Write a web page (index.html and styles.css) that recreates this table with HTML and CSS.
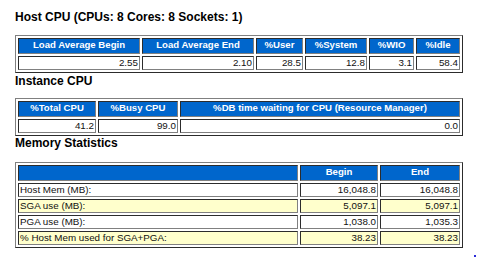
FILE: index.html
```html
<!DOCTYPE html>
<html>
<head>
<meta charset="utf-8">
<link rel="stylesheet" href="styles.css">
</head>
<body>
<div class="page">
  <div class="title t1">Host CPU (CPUs: 8 Cores: 8 Sockets: 1)</div>
  <table class="awr tb1">
    <colgroup><col class="c1a"><col class="c1b"><col class="c1c"><col class="c1d"><col class="c1e"><col class="c1f"></colgroup>
    <tr><th>Load Average Begin</th><th>Load Average End</th><th>%User</th><th>%System</th><th>%WIO</th><th>%Idle</th></tr>
    <tr><td class="num">2.55</td><td class="num">2.10</td><td class="num">28.5</td><td class="num">12.8</td><td class="num">3.1</td><td class="num">58.4</td></tr>
  </table>
  <div class="title t2">Instance CPU</div>
  <table class="awr tb2">
    <colgroup><col class="c2a"><col class="c2b"><col class="c2c"></colgroup>
    <tr><th>%Total CPU</th><th>%Busy CPU</th><th>%DB time waiting for CPU (Resource Manager)</th></tr>
    <tr><td class="num">41.2</td><td class="num">99.0</td><td class="num">0.0</td></tr>
  </table>
  <div class="title t3">Memory Statistics</div>
  <table class="awr tb3">
    <colgroup><col class="c3a"><col class="c3b"><col class="c3c"></colgroup>
    <tr><th></th><th>Begin</th><th>End</th></tr>
    <tr><td>Host Mem (MB):</td><td class="num">16,048.8</td><td class="num">16,048.8</td></tr>
    <tr class="alt"><td>SGA use (MB):</td><td class="num">5,097.1</td><td class="num">5,097.1</td></tr>
    <tr><td>PGA use (MB):</td><td class="num">1,038.0</td><td class="num">1,035.3</td></tr>
    <tr class="alt"><td>% Host Mem used for SGA+PGA:</td><td class="num">38.23</td><td class="num">38.23</td></tr>
  </table>
</div>
<span class="dot"></span>
</body>
</html>
```
FILE: styles.css
```css
html, body {
  margin: 0;
  padding: 0;
  background: #ffffff;
}
body {
  font-family: "Liberation Sans", Arial, sans-serif;
  color: #000;
  width: 477px;
  height: 258px;
  overflow: hidden;
  position: relative;
}
.page {
  padding: 10px 0 0 15px;
}
.title {
  font: bold 12px/14px "Liberation Sans", Arial, sans-serif;
  color: #000;
}
.t2 { margin-top: 1px; }
.t3 { margin-top: 0; }
table.awr {
  width: 448px;
  table-layout: fixed;
  border-collapse: separate;
  border-spacing: 2px;
  border: 1px outset #808080;
}
.tb1 { margin-top: 11px; }
.tb2 { margin-top: 10px; }
.tb3 { margin-top: 12px; }
table.awr th, table.awr td {
  box-sizing: border-box;
  border: 1px inset #808080;
  white-space: nowrap;
  overflow: hidden;
}
table.awr th {
  font: bold 9.6px/12px "Liberation Sans", Arial, sans-serif;
  color: #fff;
  background: #0066cc;
  padding: 0 4px 2px;
  text-align: center;
}
table.awr td {
  font: 9.8px/12px "Liberation Sans", Arial, sans-serif;
  color: #111;
  background: #fff;
  padding: 0 1px;
  text-align: left;
  vertical-align: top;
}
table.awr td.num { text-align: right; }
table.awr tr.alt td { background: #ffffcc; }
.c1a { width: 122px; }
.c1b { width: 112px; }
.c1c { width: 47px; }
.c1d { width: 62px; }
.c1e { width: 45px; }
.c1f { width: 44px; }
.c2a { width: 78px; }
.c2b { width: 80px; }
.c2c { width: 280px; }
.c3a { width: 280px; }
.c3b { width: 78px; }
.c3c { width: 80px; }
.dot {
  position: absolute;
  left: 474px;
  top: 255px;
  width: 2px;
  height: 2px;
  background: #2a2ad8;
}
```
